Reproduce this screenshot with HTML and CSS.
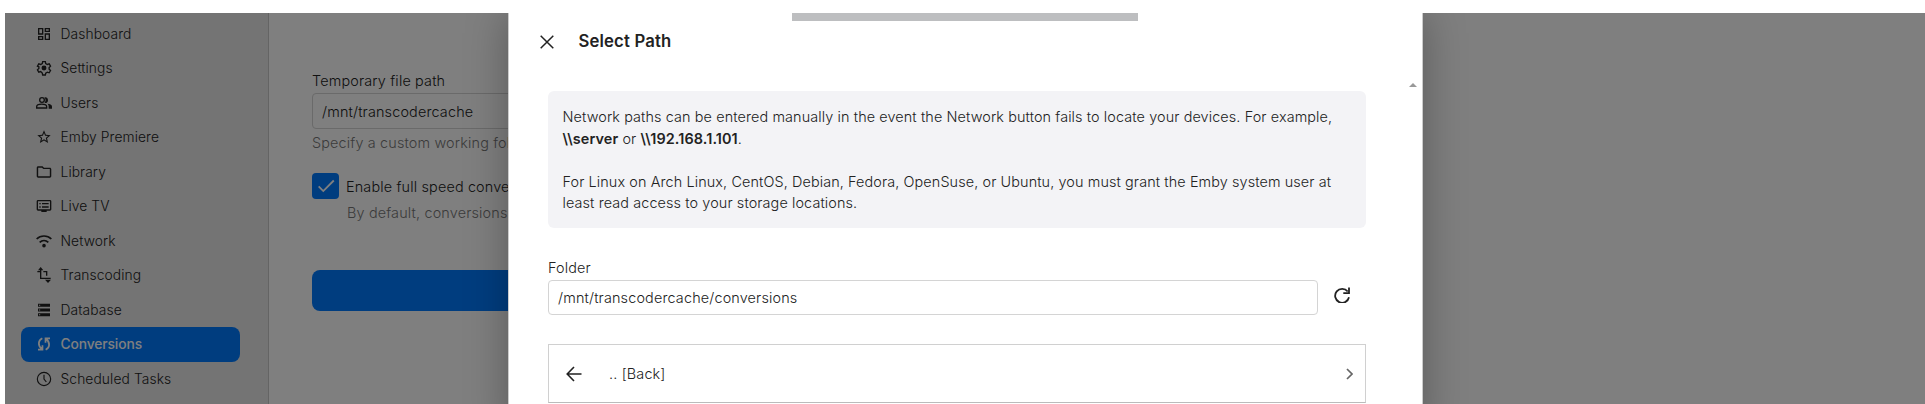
FILE: index.html
```
<!DOCTYPE html>
<html lang="en">
<head>
  <meta charset="utf-8">
  <title>Conversions</title>
  <link rel="stylesheet" href="styles.css">
</head>
<body>
  <div class="app">
    <nav class="sidebar">
      <a class="navItem">
        <svg class="icon" viewBox="0 0 24 24"><path d="M19 5v2h-4V5h4M9 5v6H5V5h4m10 8v6h-4v-6h4M9 17v2H5v-2h4M21 3h-8v6h8V3zM11 3H3v10h8V3zm10 8h-8v10h8V11zm-10 4H3v6h8v-6z"/></svg>
        <span>Dashboard</span>
      </a>
      <a class="navItem">
        <svg class="icon" viewBox="0 0 24 24"><path class="line" d="M10 2.500h4l.6 2.800 2.400 1.400 2.800-.9 2 3.500-2.100 1.900v2.600l2.100 1.900-2 3.500-2.800-.9-2.400 1.400-.6 2.800h-4l-.6-2.800L7 17.300l-2.800.9-2-3.500 2.100-1.900v-2.600L2.200 9.300l2-3.500 2.800.9 2.400-1.400z"/><circle cx="12" cy="12" r="3.700"/></svg>
        <span>Settings</span>
      </a>
      <a class="navItem">
        <svg class="icon" viewBox="0 0 24 24"><path class="line" d="M1 19.500v-2c0-2.500 4-3.700 7.500-3.700s7.500 1.200 7.500 3.700v2z"/><circle class="line" cx="9" cy="7.500" r="3.500"/><path d="M14 12c2.300 0 4-1.800 4-4.300s-1.700-4.300-4-4.300c-.5 0-.9.1-1.300.2a6.500 6.500 0 0 1 0 8.200c.4.100.8.200 1.300.2zM17 13.300c1.200.9 2 2.200 2 3.900v3.300h5v-3.300c0-2.300-3.500-3.500-7-3.900z"/></svg>
        <span>Users</span>
      </a>
      <a class="navItem">
        <svg class="icon" viewBox="0 0 24 24"><path d="M22 9.240l-7.190-.62L12 2 9.190 8.630 2 9.240l5.460 4.730L5.820 21 12 17.270 18.180 21l-1.630-7.030L22 9.240zM12 15.400l-3.760 2.270 1-4.280-3.320-2.880 4.380-.38L12 6.100l1.710 4.040 4.380.38-3.320 2.880 1 4.280L12 15.400z"/></svg>
        <span>Emby Premiere</span>
      </a>
      <a class="navItem">
        <svg class="icon" viewBox="1 1 22 22"><path d="M9.170 6l2 2H20v10H4V6h5.170M10 4H4c-1.100 0-1.990.9-1.990 2L2 18c0 1.100.9 2 2 2h16c1.100 0 2-.9 2-2V8c0-1.100-.9-2-2-2h-8l-2-2z"/></svg>
        <span>Library</span>
      </a>
      <a class="navItem">
        <svg class="icon" viewBox="0 0 24 24"><path d="M21 3H3c-1.100 0-2 .9-2 2v12c0 1.100.9 2 2 2h5v2h8v-2h5c1.100 0 2-.9 2-2V5c0-1.100-.9-2-2-2zm0 14H3V5h18v12zM9 7.500h10v2H9zM9 12.500h10v2H9zM5 7.500h2v2H5zM5 12.500h2v2H5z"/></svg>
        <span>Live TV</span>
      </a>
      <a class="navItem">
        <svg class="icon" viewBox="0 0 24 24"><path class="line thick" d="M1 9c6-6 16-6 22 0M5.500 14c3.800-3.600 9.200-3.600 13 0"/><circle cx="12" cy="19" r="2.700"/></svg>
        <span>Network</span>
      </a>
      <a class="navItem">
        <svg class="icon" viewBox="0 0 24 24"><path class="line" d="M7 3v14h15M2 7h5M11 7h5v6"/><path d="M7 0l4 5H3zM18 24l4.500-5h-9z"/></svg>
        <span>Transcoding</span>
      </a>
      <a class="navItem">
        <svg class="icon" viewBox="0 0 24 24"><path d="M3 2.500h18v4.500H3zM3 9.700h18v4.500H3zM3 17h18v4.500H3z"/><path class="dots" d="M4.500 4h1.800v1.500H4.500zM4.500 11.200h1.800v1.500H4.500zM4.500 18.500h1.800V20H4.500z"/></svg>
        <span>Database</span>
      </a>
      <a class="navItem active">
        <svg class="icon" viewBox="0 0 24 24"><path class="line thick" d="M9.500 3.500C3 6.500 2.500 14 8.500 19.500M3 20.500h6.700V14M14.500 20.500c6.500-3 7-10.500 1-16M21 3.500h-6.700V10"/></svg>
        <span>Conversions</span>
      </a>
      <a class="navItem">
        <svg class="icon" viewBox="0 0 24 24"><circle class="line thin" cx="12" cy="12" r="10"/><path class="line thin" d="M12 5.500V12l3.500 4.500"/></svg>
        <span>Scheduled Tasks</span>
      </a>
    </nav>

    <main class="content">
      <label class="fieldLabel">Temporary file path</label>
      <div class="textInput pathInput">/mnt/transcodercache</div>
      <div class="fieldDesc">Specify a custom working folder</div>
      <div class="checkRow">
        <span class="checkbox">
          <svg viewBox="0 0 24 24"><path d="M4 12.500l5 5L20.500 6"/></svg>
        </span>
        <span>Enable full speed conversion</span>
      </div>
      <div class="fieldDesc checkDesc">By default, conversions will run</div>
      <div class="saveBtn"></div>
    </main>

    <!-- dialog over the page -->
    <div class="backdrop">
      <div class="dialog">
        <div class="dragHandle"></div>
        <div class="dialogHeader">
          <svg class="closeBtn" viewBox="0 0 14 14"><path d="M.7.7l12.600 12.600M13.300.7L.7 13.300"/></svg>
          <h3>Select Path</h3>
        </div>
        <span class="scrollUp"></span>
        <div class="dialogBody">
          <div class="infoBox">
            Network paths can be entered manually in the event the Network button fails to locate your devices. For example,<br>
            <b>\\server</b> or <b>\\192.168.1.101</b>.<br>
            <br>
            For Linux on Arch Linux, CentOS, Debian, Fedora, OpenSuse, or Ubuntu, you must grant the Emby system user at<br>
            least read access to your storage locations.
          </div>
          <label class="fieldLabel">Folder</label>
          <div class="folderRow">
            <div class="textInput">/mnt/transcodercache/conversions</div>
            <svg class="refresh" viewBox="0 0 16 16"><path d="M13.700 4.500A7 7 0 1 0 15 10.300M15 .5v5.700H9.300"/></svg>
          </div>
          <div class="listItem">
            <svg class="backArrow" viewBox="0 0 16 16"><path d="M15.500 8H1.500M8 1L1.200 8 8 15"/></svg>
            <span>.. [Back]</span>
            <svg class="chevron" viewBox="0 0 7 12"><path d="M1 1l5 5-5 5"/></svg>
          </div>
        </div>
      </div>
    </div>
  </div>
</body>
</html>
```
FILE: styles.css
```
body {
  margin: 0;
  padding: 13px 0 0 5px;
  height: 404px;
  box-sizing: border-box;
  overflow: hidden;
  background-color: #fff;
  font-family: Inter, "Liberation Sans", sans-serif;
  font-size: 14.4px;
  font-weight: 300;
  letter-spacing: 0.16px;
  color: #222;
}

.app {
  position: relative;
  display: flex;
  height: 391px;
  overflow: hidden;
  background-color: #fff;
}

.sidebar {
  width: 264px;
  flex: none;
  padding: 3.6px 28px 0 16px;
  box-sizing: border-box;
  background-color: #e8e8e8;
  border-right: 1px solid #c8c8c8;
  font-size: 13.8px;
  letter-spacing: 0.1px;
}

.navItem {
  display: flex;
  align-items: center;
  height: 34.5px;
  padding-left: 15px;
  gap: 8.5px;
  border-radius: 8px;
}

.navItem.active {
  background-color: #007aff;
  color: #fff;
  font-weight: 500;
  letter-spacing: -0.1px;
}

.icon {
  width: 16px;
  height: 16px;
  flex: none;
  fill: currentColor;
}

.icon .line {
  fill: none;
  stroke: currentColor;
  stroke-width: 2;
}

.icon .thick {
  stroke-width: 2.6;
}

.icon .thin {
  stroke-width: 1.7;
}

.icon .dots {
  fill: #e8e8e8;
}

.content {
  width: 1000px;
  flex: none;
  padding: 57px 44px 0 43px;
  box-sizing: border-box;
}

.fieldLabel {
  display: block;
  line-height: 22px;
}

.textInput {
  display: flex;
  align-items: center;
  height: 35px;
  padding: 0 9px;
  box-sizing: border-box;
  border: 1px solid #d4d4d4;
  border-radius: 4px;
}

.pathInput {
  height: 36px;
  margin-top: 1px;
}

.fieldDesc {
  margin-top: 3px;
  line-height: 22px;
  color: #777;
}

.checkRow {
  display: flex;
  align-items: center;
  gap: 7px;
  height: 26px;
  margin-top: 19px;
}

.checkbox {
  display: flex;
  justify-content: center;
  align-items: center;
  width: 27px;
  height: 26px;
  border-radius: 4px;
  background-color: #007aff;
}

.checkbox svg {
  width: 22px;
  height: 22px;
  fill: none;
  stroke: #fff;
  stroke-width: 2;
}

.checkDesc {
  padding-left: 35px;
}

.saveBtn {
  height: 41px;
  margin-top: 46px;
  border-radius: 8px;
  background-color: #007aff;
}

.backdrop {
  position: absolute;
  inset: 0;
  background-color: rgba(0, 0, 0, 0.5);
}

.dialog {
  position: relative;
  width: 915px;
  height: 420px;
  margin-left: 503px;
  box-sizing: border-box;
  border: solid #ccc;
  border-width: 0 1px;
  background-color: #fff;
  box-shadow: 0 0 40px rgba(0, 0, 0, 0.3);
}

.dragHandle {
  width: 346px;
  height: 8px;
  margin-left: 283px;
  background-color: #bdbec0;
}

.dialogHeader {
  display: flex;
  align-items: center;
  height: 42px;
  padding-left: 31px;
  gap: 24.5px;
}

.dialogHeader h3 {
  margin: 0 0 2px;
  font-size: 16.7px;
  font-weight: 600;
}

.closeBtn {
  width: 14px;
  height: 14px;
  fill: none;
  stroke: #222;
  stroke-width: 1.5;
}

.scrollUp {
  position: absolute;
  top: 70px;
  right: 5px;
  border: solid transparent;
  border-width: 0 4px 4px;
  border-bottom-color: #999;
}

.dialogBody {
  padding: 28px 56px 0 39px;
}

.infoBox {
  height: 137px;
  padding: 15px 0 0 14.5px;
  box-sizing: border-box;
  border-radius: 6px;
  background-color: #f3f3f6;
  line-height: 21.6px;
  letter-spacing: 0.11px;
  white-space: nowrap;
}

.infoBox b {
  font-weight: 600;
}

.dialogBody .fieldLabel {
  margin: 28px 0 1px;
  line-height: 23px;
}

.folderRow {
  display: flex;
  align-items: center;
}

.folderRow .textInput {
  width: 770px;
}

.refresh {
  width: 16px;
  height: 16px;
  margin: -5px 0 0 16px;
  fill: none;
  stroke: #222;
  stroke-width: 1.8;
}

.listItem {
  display: flex;
  align-items: center;
  height: 59px;
  margin-top: 29px;
  padding: 0 12px 0 17px;
  box-sizing: border-box;
  border: 1px solid #d0d0d0;
  border-bottom-color: #bbb;
}

.backArrow {
  width: 16px;
  height: 16px;
  margin-right: 27px;
  fill: none;
  stroke: #222;
  stroke-width: 1.6;
}

.chevron {
  width: 7px;
  height: 12px;
  margin-left: auto;
  fill: none;
  stroke: #666;
  stroke-width: 1.7;
}
```
